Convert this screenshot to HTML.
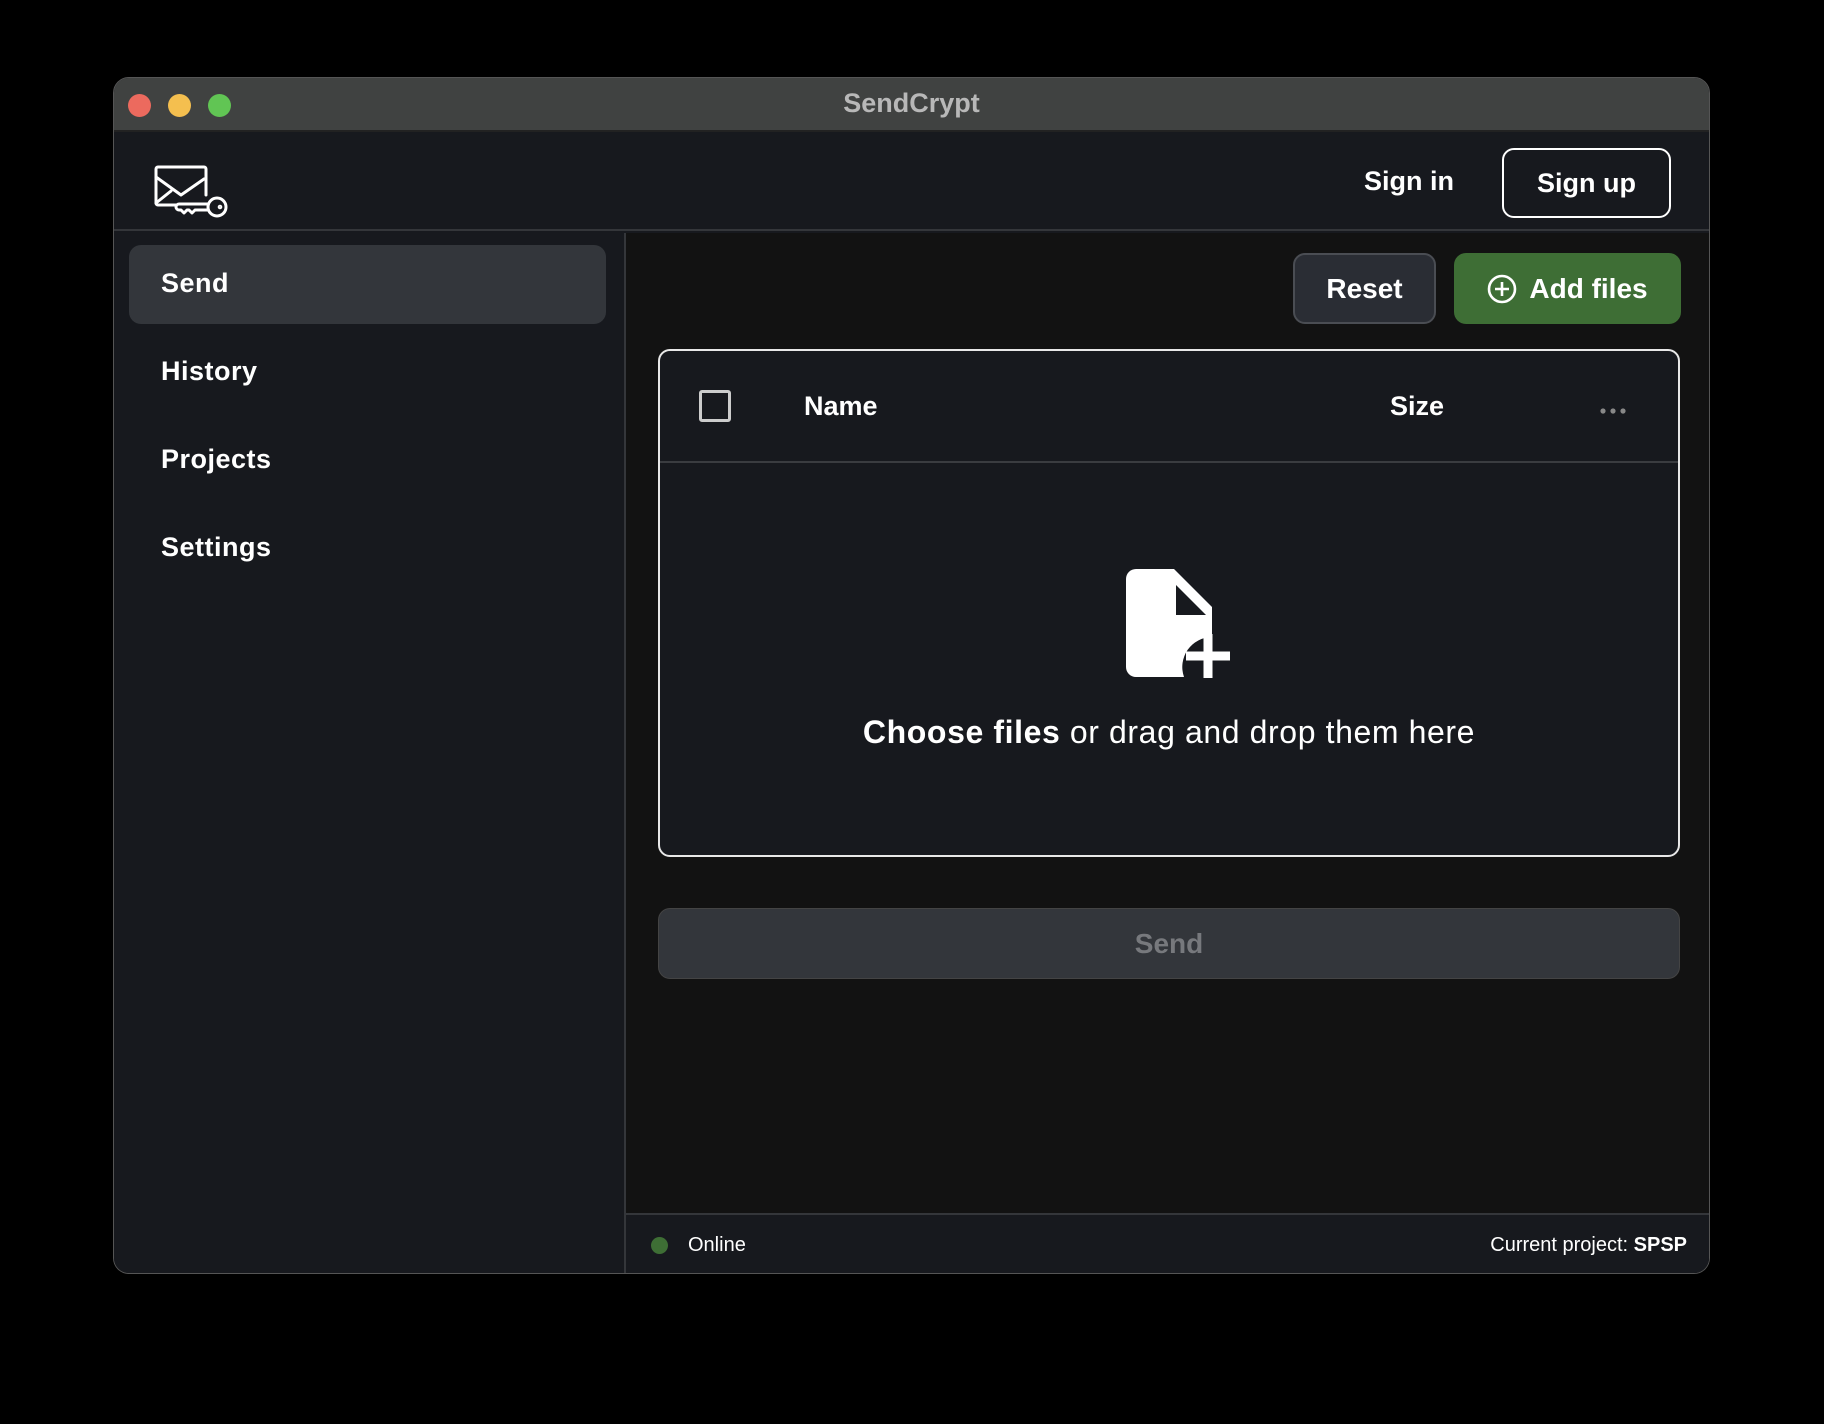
<!DOCTYPE html>
<html><head><style>
*{box-sizing:border-box;margin:0;padding:0}
body{width:1824px;height:1424px;background:#000;font-family:"Liberation Sans",sans-serif;position:relative;overflow:hidden;color:#fff}
.win{position:absolute;left:113px;top:77px;width:1597px;height:1197px;border-radius:16px;overflow:hidden;background:#17191e;border:1px solid #555}
.tb{position:absolute;left:0;top:0;right:0;height:54px;background:#404241;border-bottom:2px solid #222}
.dot{position:absolute;top:16px;width:23px;height:23px;border-radius:50%}
.title{position:absolute;left:0;right:0;top:10px;text-align:center;font-weight:bold;font-size:27px;color:#b8b8b8}
.hdr{position:absolute;left:0;right:0;top:54px;height:99px;background:#17191e;border-bottom:2px solid #34363a}
.side{position:absolute;left:0;top:155px;width:512px;bottom:0;background:#17191e;border-right:2px solid #34363a}
.main{position:absolute;left:512px;top:155px;right:0;bottom:0;background:#121212}
.nav{position:absolute;left:47px;font-size:27px;font-weight:bold;letter-spacing:0.5px}
.btn{position:absolute;border-radius:12px;font-weight:bold;display:flex;align-items:center;justify-content:center}
</style></head><body>
<div class="win">
 <div class="tb">
  <div class="dot" style="left:14px;background:#ec6a5e"></div>
  <div class="dot" style="left:54px;background:#f4bf4f"></div>
  <div class="dot" style="left:94px;background:#61c554"></div>
  <div class="title">SendCrypt</div>
 </div>
 <div class="hdr">
  <svg style="position:absolute;left:40px;top:33px" width="74" height="56" viewBox="0 0 74 56" fill="none" stroke="#fff" stroke-width="3" stroke-linecap="round" stroke-linejoin="round">
   <path d="M22 40H4a2 2 0 0 1-2-2V4a2 2 0 0 1 2-2h46a2 2 0 0 1 2 2v26"/>
   <path d="M2 12l25 18 23-16"/>
   <path d="M2 38l15-12"/>
   <path d="M54 39H25a3 3 0 0 0 0 6h2l3 3 3-3h2l3 3 3-3h13"/>
   <circle cx="63" cy="42" r="9"/>
   <circle cx="66" cy="42" r="0.8" fill="#fff"/>
  </svg>
  <div style="position:absolute;left:1250px;top:34px;font-size:27px;font-weight:bold">Sign in</div>
  <div class="btn" style="left:1388px;top:16px;width:169px;height:70px;border:2px solid #fff;font-size:27px">Sign up</div>
 </div>
 <div class="side">
  <div style="position:absolute;left:15px;top:12px;width:477px;height:79px;border-radius:12px;background:#33363b"></div>
  <div class="nav" style="top:35px">Send</div>
  <div class="nav" style="top:123px">History</div>
  <div class="nav" style="top:211px">Projects</div>
  <div class="nav" style="top:299px">Settings</div>
 </div>
 <div class="main">
  <div class="btn" style="left:667px;top:20px;width:143px;height:71px;background:#2a2d34;border:2px solid #4a4d53;font-size:28px">Reset</div>
  <div class="btn" style="left:828px;top:20px;width:227px;height:71px;background:#3e6e35;font-size:28px;gap:12px">
   <svg width="30" height="30" viewBox="0 0 30 30" fill="none" stroke="#fff" stroke-width="2.6"><circle cx="15" cy="15" r="13"/><path d="M15 8v14M8 15h14"/></svg>Add files</div>
  <div style="position:absolute;left:32px;top:116px;width:1022px;height:508px;border:2px solid #e8e8e8;border-radius:12px;background:#17191e">
   <div style="position:absolute;left:0;right:0;top:0;height:112px;border-bottom:2px solid #3a3c40"></div>
   <div style="position:absolute;left:39px;top:39px;width:32px;height:32px;border:3px solid #ccc;border-radius:3px"></div>
   <div style="position:absolute;left:144px;top:40px;font-size:27px;font-weight:bold">Name</div>
   <div style="position:absolute;left:730px;top:40px;font-size:27px;font-weight:bold">Size</div>
   <svg style="position:absolute;left:940px;top:57px" width="26" height="6"><circle cx="3" cy="3" r="2.6" fill="#888"/><circle cx="13" cy="3" r="2.6" fill="#888"/><circle cx="23" cy="3" r="2.6" fill="#888"/></svg>
   <svg style="position:absolute;left:466px;top:218px" width="104" height="114" viewBox="0 0 104 114">
    <path d="M10 0H48L86 38V68A30 30 0 0 0 58 108H10A10 10 0 0 1 0 98V10A10 10 0 0 1 10 0Z" fill="#fff"/>
    <path d="M50 16V46H80Z" fill="#17191e"/>
    <path d="M60 87H104M82 65V109" stroke="#fff" stroke-width="9"/>
   </svg>
   <div style="position:absolute;left:0;right:0;top:363px;text-align:center;font-size:32px;letter-spacing:0.6px"><b>Choose files</b> or drag and drop them here</div>
  </div>
  <div class="btn" style="left:32px;top:675px;width:1022px;height:71px;background:#33363b;border:1px solid #444;color:#77797d;font-size:28px">Send</div>
  <div style="position:absolute;left:0;right:0;top:980px;height:2px;background:#34363a"></div>
  <div style="position:absolute;left:0;right:0;top:982px;bottom:0;background:#17191e"></div>
  <div style="position:absolute;left:25px;top:1004px;width:17px;height:17px;border-radius:50%;background:#3e6e35"></div>
  <div style="position:absolute;left:62px;top:1001px;font-size:20px">Online</div>
  <div style="position:absolute;right:22px;top:1001px;font-size:20px">Current project: <b>SPSP</b></div>
 </div>
</div>
</body></html>
